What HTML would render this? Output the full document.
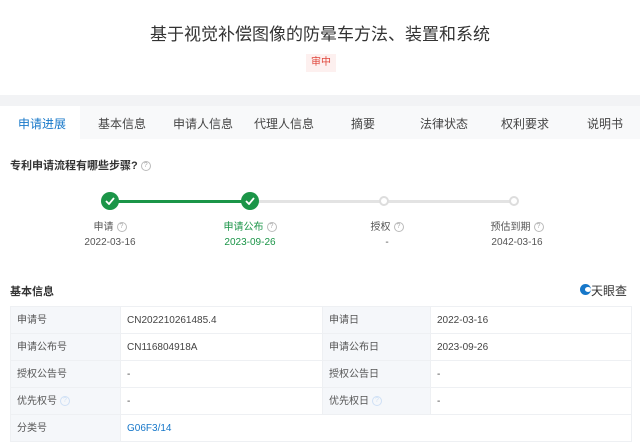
<!DOCTYPE html><html><head><meta charset="utf-8"><style>
*{margin:0;padding:0;box-sizing:border-box}
body{width:640px;height:438px;overflow:hidden;background:#fff;font-family:"Liberation Sans","Noto Sans CJK SC",sans-serif;color:#333;position:relative}
.a{position:absolute}
.title{top:20px;left:0;width:640px;text-align:center;font-size:17px;color:#333}
.tag{top:54px;left:306px;width:30px;height:18px;background:#fdf0ef;color:#e0463b;font-size:10px;text-align:center;line-height:18px}
.band{top:95px;left:0;width:640px;height:11px;background:#f2f3f5}
.tabs{top:106px;left:0;width:640px;height:33px;background:#f8f9fa;font-size:12px;color:#444}
.tabs span{position:absolute;top:9px}
.q{display:inline-block;width:10px;height:10px;border:1px solid #bbb;border-radius:50%;font-size:7px;line-height:8px;text-align:center;color:#aaa;vertical-align:middle;margin-left:3px}
.c{position:absolute;width:18px;height:18px;border-radius:50%;background:#1b9548;top:192px}
.c svg{position:absolute;left:4px;top:5px}
.o{position:absolute;width:10px;height:10px;border-radius:50%;border:2px solid #ddd;background:#fff;top:196px}
.lbl{position:absolute;font-size:10px;color:#555;text-align:center;width:100px;line-height:12px}
table{position:absolute;top:306px;left:10px;width:622px;border-collapse:collapse;font-size:10px}
td{height:27px;border:1px solid #eef0f3;padding:2px 0 0 6px;color:#444;line-height:12px;vertical-align:middle}
td.k{background:#f5f7fa;color:#555}
</style></head><body>
<div class="a title">基于视觉补偿图像的防晕车方法、装置和系统</div>
<div class="a tag">审中</div>
<div class="a band"></div>
<div class="a tabs">
<div class="a" style="left:0;top:0;width:80px;height:33px;background:#fff"></div>
<span style="left:18px;color:#1677c9">申请进展</span>
<span style="left:98px">基本信息</span>
<span style="left:173px">申请人信息</span>
<span style="left:254px">代理人信息</span>
<span style="left:351px">摘要</span>
<span style="left:420px">法律状态</span>
<span style="left:501px">权利要求</span>
<span style="left:587px">说明书</span>
</div>
<div class="a" style="top:157px;left:10px;font-size:11px;font-weight:bold;color:#333">专利申请流程有哪些步骤?<span class="q" style="font-weight:normal">?</span></div>
<div class="a" style="top:200px;left:110px;width:140px;height:3px;background:#1b9548"></div>
<div class="a" style="top:200px;left:250px;width:264px;height:3px;background:#e3e3e3"></div>
<div class="c" style="left:101px"><svg width="10" height="8"><path d="M1 4l3 3 5-6" stroke="#fff" stroke-width="1.8" fill="none"/></svg></div>
<div class="c" style="left:241px"><svg width="10" height="8"><path d="M1 4l3 3 5-6" stroke="#fff" stroke-width="1.8" fill="none"/></svg></div>
<div class="o" style="left:379px"></div>
<div class="o" style="left:509px"></div>
<div class="lbl" style="left:60px;top:222px">申请<span class="q">?</span></div>
<div class="lbl" style="left:60px;top:237px">2022-03-16</div>
<div class="lbl" style="left:200px;top:222px;color:#1b9548">申请公布<span class="q">?</span></div>
<div class="lbl" style="left:200px;top:237px;color:#1b9548">2023-09-26</div>
<div class="lbl" style="left:337px;top:222px">授权<span class="q">?</span></div>
<div class="lbl" style="left:337px;top:237px">-</div>
<div class="lbl" style="left:467px;top:222px">预估到期<span class="q">?</span></div>
<div class="lbl" style="left:467px;top:237px">2042-03-16</div>
<div class="a" style="top:283px;left:10px;font-size:11px;font-weight:bold">基本信息</div>
<div class="a" style="top:284px;left:580px;width:11px;height:11px;border-radius:50%;background:#1677c9"></div>
<div class="a" style="top:287px;left:585px;width:6px;height:5px;border-radius:50%;background:#fff"></div>
<div class="a" style="top:282px;left:591px;font-size:12px;color:#333">天眼查</div>
<table>
<tr><td class="k" style="width:110px">申请号</td><td style="width:202px">CN202210261485.4</td><td class="k" style="width:108px">申请日</td><td>2022-03-16</td></tr>
<tr><td class="k">申请公布号</td><td>CN116804918A</td><td class="k">申请公布日</td><td>2023-09-26</td></tr>
<tr><td class="k">授权公告号</td><td>-</td><td class="k">授权公告日</td><td>-</td></tr>
<tr><td class="k">优先权号<span class="q" style="border-color:#cfe0f5;color:#cfe0f5">?</span></td><td>-</td><td class="k">优先权日<span class="q" style="border-color:#cfe0f5;color:#cfe0f5">?</span></td><td>-</td></tr>
<tr><td class="k">分类号</td><td colspan="3" style="color:#1677c9">G06F3/14</td></tr>
</table>
</body></html>
